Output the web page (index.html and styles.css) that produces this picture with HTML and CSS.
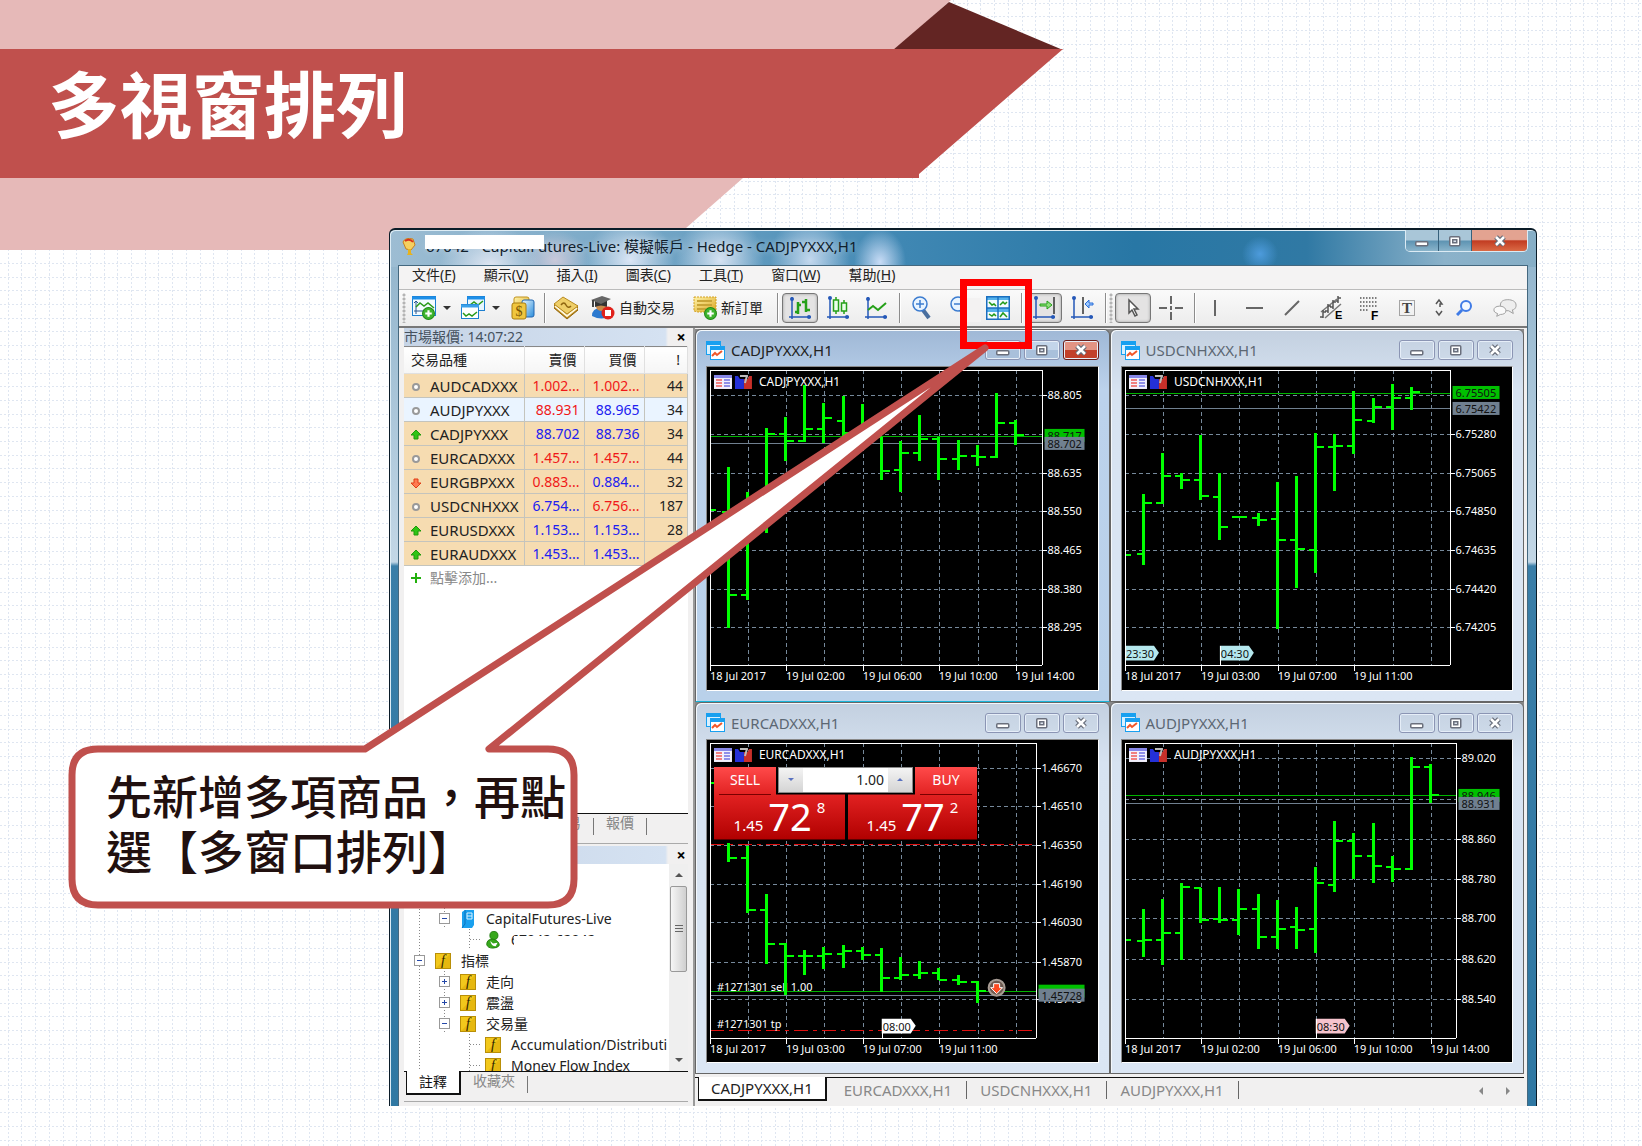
FILE: index.html
```html
<!DOCTYPE html>
<html lang="zh-Hant">
<head>
<meta charset="utf-8">
<title>多視窗排列</title>
<link rel="stylesheet" href="styles.css">
</head>
<body>
<svg class="defs" width="0" height="0" aria-hidden="true">
  <defs>
    <pattern id="paper" width="137" height="137" patternUnits="userSpaceOnUse">
      <path d="M8.500 0V137M21.500 0V137M35.500 0V137M49.500 0V137M63.500 0V137M76.500 0V137M90.500 0V137M104.500 0V137M117.500 0V137M131.500 0V137M0 3.500H137M0 16.500H137M0 30.500H137M0 44.500H137M0 57.500H137M0 71.500H137M0 85.500H137M0 99.500H137M0 112.500H137M0 126.500H137" stroke="#dfe6f1" stroke-dasharray="2 2" fill="none"/>
    </pattern>
    <linearGradient id="gold" x1="0" y1="0" x2="1" y2="1"><stop offset="0" stop-color="#fff3a8"/><stop offset="1" stop-color="#dba520"/></linearGradient>
    <linearGradient id="sky" x1="0" y1="0" x2="1" y2="1"><stop offset="0" stop-color="#e8f7ff"/><stop offset="1" stop-color="#2b8ddb"/></linearGradient>
    <symbol id="i-plus" viewBox="0 0 12 12"><circle cx="6" cy="6" r="5.500" fill="#3fb52e" stroke="#1f8a17"/><path d="M6 3v6M3 6h6" stroke="#fff" stroke-width="2"/></symbol>
    <symbol id="i-newchart" viewBox="0 0 24 24"><rect x=".5" y=".5" width="23" height="19" fill="#f4fbff" stroke="#1d7fd0"/><path d="M0 2h24" stroke="#1d8fe8" stroke-width="3"/><path d="M4 5v13M2 15h19M2 7l2-2 2 2" stroke="#28568e" fill="none"/><path d="M4 11l4-4 4 3 4-3 6 5" stroke="#2a9a1a" stroke-width="1.500" fill="none"/><use href="#i-plus" x="10" y="11" width="13" height="13"/></symbol>
    <symbol id="i-profiles" viewBox="0 0 24 24"><rect x="6.500" y=".5" width="17" height="14" fill="#e8f6ff" stroke="#1d7fd0"/><path d="M6 2h18" stroke="#1d8fe8" stroke-width="3"/><path d="M9 9l4-3 4 3 5-4" stroke="#2a9a1a" stroke-width="1.500" fill="none"/><rect x=".5" y="8.500" width="17" height="14" fill="#fff" stroke="#1d7fd0"/><path d="M0 10h18" stroke="#3aa0ea" stroke-width="3"/><path d="M2 17l3 3 3-2 3 2 5-4" stroke="#2a9a1a" stroke-width="1.500" fill="none"/></symbol>
    <symbol id="i-money" viewBox="0 0 24 24"><rect x="3" y="1" width="15" height="16" rx="2" fill="url(#gold)" stroke="#c0921c"/><rect x="11" y="4" width="12" height="17" rx="2" fill="url(#sky)" stroke="#2266b0"/><rect x="1" y="7" width="14" height="16" rx="2" fill="#f0c63e" stroke="#a87c10"/><text x="8" y="20" text-anchor="middle" font-size="14" font-family="Liberation Serif,serif" fill="#7a5200">$</text></symbol>
    <symbol id="i-book" viewBox="0 0 24 24"><path d="M0 8v4l13 11 11-9v-4z" fill="#b9861a" stroke="#96690d"/><path d="M1 10l12 10 10-8" stroke="#fff8dc" stroke-width="2" fill="none"/><path d="M0 8L9 1 24 10 13 18z" fill="#efcf68" stroke="#b88a20"/><path d="M7 9q3-4 5 0t5 1" stroke="#8e6510" stroke-width="1.500" fill="none"/></symbol>
    <symbol id="i-auto" viewBox="0 0 24 24"><path d="M1 20q0-8 9-8t9 8q-8 5-18 0z" fill="#2b79cf"/><circle cx="10" cy="10" r="5" fill="#c98a4a"/><path d="M4 5h12v6q-6-3-12 0z" fill="#333"/><path d="M0 4L11 0l9 3-10 5z" fill="#666"/><path d="M2 4v7" stroke="#444" stroke-width="2"/><circle cx="17" cy="17" r="6.500" fill="#e0211a"/><rect x="14" y="14" width="6" height="6" fill="#fff"/></symbol>
    <symbol id="i-order" viewBox="0 0 24 24"><path d="M1 1h22v15H5l-4-1z" fill="url(#gold)" stroke="#d3a020" stroke-dasharray="2 1"/><path d="M4 5h15M4 9h15M4 13h9" stroke="#c9a437" stroke-width="2"/><use href="#i-plus" x="11" y="11" width="13" height="13"/></symbol>
    <symbol id="i-bars" viewBox="0 0 24 24"><path d="M4 1v22M1 21h22" stroke="#2558b8" stroke-width="1.500"/><circle cx="4" cy="3" r="2" fill="#2558b8"/><circle cx="21" cy="21" r="2" fill="#2558b8"/><path d="M10 6v12M7 16h3M10 9h3M18 3v13M18 6h-4M18 14h4" stroke="#25a018" stroke-width="2.500"/></symbol>
    <symbol id="i-candles" viewBox="0 0 24 24"><path d="M4 1v22M1 21h22" stroke="#2558b8" stroke-width="1.500"/><circle cx="4" cy="2" r="2" fill="#2558b8"/><circle cx="21" cy="21" r="2" fill="#2558b8"/><path d="M10 1v17M18 4v14" stroke="#25a018" stroke-width="1.500"/><rect x="7.500" y="4" width="5" height="11" fill="#eaffea" stroke="#25a018" stroke-width="1.500"/><rect x="15.500" y="7" width="5" height="8" fill="#eaffea" stroke="#25a018" stroke-width="1.500"/></symbol>
    <symbol id="i-line" viewBox="0 0 24 24"><path d="M4 1v22M1 21h22" stroke="#2558b8" stroke-width="1.500"/><circle cx="4" cy="3" r="2" fill="#2558b8"/><circle cx="21" cy="21" r="2" fill="#2558b8"/><path d="M4 14l5-4 5 4 8-7" stroke="#25a018" stroke-width="2" fill="none"/></symbol>
    <symbol id="i-zoomin" viewBox="0 0 24 24"><path d="M13 14l6 8" stroke="#4a6f9e" stroke-width="4"/><circle cx="10" cy="8" r="7" fill="#e8f4ff" stroke="#3c7cd0" stroke-width="1.500"/><path d="M10 4v8M6 8h8" stroke="#3c7cd0" stroke-width="1.500"/></symbol>
    <symbol id="i-zoomout" viewBox="0 0 24 24"><path d="M13 14l6 8" stroke="#4a6f9e" stroke-width="4"/><circle cx="10" cy="8" r="7" fill="#e8f4ff" stroke="#3c7cd0" stroke-width="1.500"/><path d="M6 8h8" stroke="#3c7cd0" stroke-width="1.500"/></symbol>
    <symbol id="i-tile" viewBox="0 0 24 24"><rect width="24" height="24" fill="#f4fbff"/><path d="M0 2h24M0 14h24" stroke="#55b2ec" stroke-width="4"/><path d="M.75 0v24M12 0v24M23.250 0v24M0 .75h24M0 12h24M0 23.250h24" stroke="#1a6fc0" stroke-width="1.500"/><path d="M3 6l3 3 2-1 2 2M14 9l3-3 2 2 2-2M3 18l3 2 2-2 2 2M14 21l3-4 4 4" stroke="#229a18" stroke-width="1.500" fill="none"/></symbol>
    <symbol id="i-scroll" viewBox="0 0 24 24"><path d="M4 1v22M1 21h22" stroke="#2558b8" stroke-width="1.500"/><circle cx="4" cy="2" r="2" fill="#2558b8"/><circle cx="21" cy="21" r="2" fill="#2558b8"/><path d="M22 1v17" stroke="#333" stroke-width="1.500"/><path d="M8 8h7V5l5 4-5 4v-3H8z" fill="#8fe07a" stroke="#25a018"/></symbol>
    <symbol id="i-shift" viewBox="0 0 24 24"><path d="M4 1v22M1 21h22" stroke="#2558b8" stroke-width="1.500"/><circle cx="4" cy="2" r="2" fill="#2558b8"/><circle cx="21" cy="21" r="2" fill="#2558b8"/><path d="M13 1v17" stroke="#333" stroke-width="1.500"/><path d="M23 7h-4V4l-4 4 4 4V9h4z" fill="#9cc8ff" stroke="#2a6fd8"/></symbol>
    <symbol id="i-cursor" viewBox="0 0 24 24"><path d="M8 4v13l3-3 3 6 2-1-3-6h4z" fill="#fff" stroke="#555" stroke-width="1.500"/></symbol>
    <symbol id="i-cross" viewBox="0 0 24 24"><path d="M12 0v8M12 10v4M12 16v8M0 12h8M16 12h8" stroke="#666" stroke-width="2"/></symbol>
    <symbol id="i-vline" viewBox="0 0 24 24"><path d="M10 4v16" stroke="#666" stroke-width="2"/></symbol>
    <symbol id="i-hline" viewBox="0 0 24 24"><path d="M3 12h17" stroke="#666" stroke-width="2"/></symbol>
    <symbol id="i-trend" viewBox="0 0 24 24"><path d="M4 19L18 5" stroke="#666" stroke-width="2"/></symbol>
    <symbol id="i-channel" viewBox="0 0 24 24"><path d="M2 16L18 3M6 22L22 8" stroke="#777" stroke-width="1.500"/><path d="M4 14v8M1 21h3M4 16h3M9 8v9M6 15h3M9 10h3M14 4v9M11 11h3M14 6h3M19 0v7M17 5h2M19 2h3" stroke="#555" stroke-width="1.500"/><text x="16" y="23" font-size="11" font-weight="bold" font-family="Liberation Sans,sans-serif">E</text></symbol>
    <symbol id="i-fibo" viewBox="0 0 24 24"><path d="M3 2h17M3 6h17M3 10h17M3 14h9" stroke="#555" stroke-width="1.500" stroke-dasharray="1.500 1.500"/><text x="14" y="24" font-size="12" font-weight="bold" font-family="Liberation Sans,sans-serif">F</text></symbol>
    <symbol id="i-text" viewBox="0 0 24 24"><rect x="4.500" y="4.500" width="15" height="15" fill="none" stroke="#555" stroke-dasharray="1 1"/><text x="12" y="17" text-anchor="middle" font-size="15" font-weight="bold" font-family="Liberation Serif,serif" fill="#444">T</text></symbol>
    <symbol id="i-more" viewBox="0 0 10 24"><path d="M2 8l3-4 3 4H6v3M2 15l3 4 3-4" stroke="#555" stroke-width="1.500" fill="none"/></symbol>
    <symbol id="i-search" viewBox="0 0 16 16"><path d="M1 15l5-5" stroke="#3f7be6" stroke-width="3"/><circle cx="10" cy="6" r="5" fill="#f2f8ff" stroke="#3f7be6" stroke-width="2"/></symbol>
    <symbol id="i-chat" viewBox="0 0 26 20"><path d="M16 1c5 0 9 2 9 6s-3 5-4 5l1 4-5-3c-6 0-9-2-9-6s3-6 8-6z" fill="#eee" stroke="#999"/><path d="M7 8c4 0 7 2 7 5s-3 4-6 4l-4 2 1-3c-3-1-4-2-4-4s2-4 6-4z" fill="#fafafa" stroke="#999"/></symbol>
    <symbol id="i-mdi" viewBox="0 0 19 19"><rect x=".5" y=".5" width="14" height="13" fill="#d8f0ff" stroke="#18a0f0"/><path d="M0 2h15" stroke="#18a0f0" stroke-width="4"/><rect x="4.500" y="5.500" width="14" height="13" fill="#fff" stroke="#18a0f0"/><path d="M4 7h15" stroke="#18a0f0" stroke-width="4"/><path d="M6 15l3-3 2 2 5-4" stroke="#f0582a" stroke-width="2" fill="none"/></symbol>
    <symbol id="i-min" viewBox="0 0 14 12"><rect x=".75" y="6.750" width="12" height="4" rx="1" fill="#fff" stroke="#6a6f7c" stroke-width="1.500"/></symbol>
    <symbol id="i-max" viewBox="0 0 14 12"><rect x="1.750" y="1.750" width="10" height="9" rx="1" fill="#fff" stroke="#6a6f7c" stroke-width="1.500"/><rect x="4.750" y="4.750" width="4" height="3" fill="#dde4ee" stroke="#6a6f7c" stroke-width="1.500"/></symbol>
    <symbol id="i-close" viewBox="0 0 14 12"><path d="M3 2l8 8M11 2l-8 8" stroke="#666b78" stroke-width="5"/><path d="M3 2l8 8M11 2l-8 8" stroke="#fff" stroke-width="2.500"/></symbol>
    <symbol id="i-func" viewBox="0 0 16 16"><rect x=".5" y=".5" width="15" height="15" fill="#f2c81c" stroke="#b98f08"/><path d="M1 15L15 1v14z" fill="#e6b80f"/><text x="8" y="12" text-anchor="middle" font-size="14" font-style="italic" font-family="Liberation Serif,serif" fill="#2c2200">f</text></symbol>
    <symbol id="i-server" viewBox="0 0 14 18"><path d="M1 2l3-2h9v15l-2 3H1z" fill="#1aa0ee"/><path d="M4 0v14l-3 4" stroke="#0b73bd" fill="none"/><path d="M6 3h5v6H6zM6 6h5" stroke="#d8f2ff" fill="none"/></symbol>
    <symbol id="i-user" viewBox="0 0 16 20"><circle cx="9" cy="5" r="4.500" fill="#37a81c" stroke="#1f7a0c"/><path d="M1 15q0-6 7-6 7 2 7 7-2 3-7 3-6 0-7-4z" fill="#37a81c" stroke="#1f7a0c"/><path d="M5 11l3 3 5-1-2 4q-5 0-6-6z" fill="#fff"/></symbol>
    <symbol id="i-dot" viewBox="0 0 10 10"><circle cx="5" cy="5" r="3" fill="#fff" stroke="#999" stroke-width="2"/></symbol>
    <symbol id="i-up" viewBox="0 0 10 10"><path d="M5 0l5 5H7v4H3V5H0z" fill="#2fc414" stroke="#1e9a0a"/></symbol>
    <symbol id="i-down" viewBox="0 0 10 10"><path d="M5 10l5-5H7V1H3v4H0z" fill="#ff7a50" stroke="#e03c14"/></symbol>
    <symbol id="i-add" viewBox="0 0 10 10"><path d="M5 0v10M0 5h10" stroke="#22b00c" stroke-width="2"/></symbol>
  </defs>
</svg>

<main class="slide">
  <svg class="paper" aria-hidden="true"><rect width="100%" height="100%" fill="url(#paper)"/></svg>

  <header class="banner">
    <svg class="ribbon" width="1070" height="250" viewBox="0 0 1070 250" aria-hidden="true">
      <path d="M0 0H951L895 50H0z" fill="#e6b9b8"/>
      <path d="M0 178H743L661 250H0z" fill="#e6b9b8"/>
      <path d="M949 2L1063 50H893z" fill="#632523"/>
      <path d="M0 49H1063L919 174V178H0z" fill="#c0504d"/>
    </svg>
    <h1 class="heading">多視窗排列</h1>
  </header>

  <section class="window" aria-label="CapitalFutures-Live">
    <div class="titlebar">
      <svg class="app-icon" viewBox="0 0 14 18"><path d="M1 4q2-5 10-3l2 6-4 5-5-1z" fill="#f5d060" stroke="#c9811c"/><path d="M3 3q5-3 8 1" stroke="#d8321c" stroke-width="2" fill="none"/><path d="M6 11h3v4l2 2H5l1-2z" fill="#e8b21c"/></svg>
      <p class="title">67042 - CapitalFutures-Live: 模擬帳戶 - Hedge - CADJPYXXX,H1</p>
      <div class="controls">
        <button class="ctl" aria-label="最小化"><svg><use href="#i-min"/></svg></button>
        <button class="ctl" aria-label="最大化"><svg><use href="#i-max"/></svg></button>
        <button class="ctl ctl-close" aria-label="關閉"><svg><use href="#i-close"/></svg></button>
      </div>
    </div>

    <div class="client">
      <nav class="menu">
        <button>文件(<u>F</u>)</button><button>顯示(<u>V</u>)</button><button>插入(<u>I</u>)</button><button>圖表(<u>C</u>)</button><button>工具(<u>T</u>)</button><button>窗口(<u>W</u>)</button><button>幫助(<u>H</u>)</button>
      </nav>

      <div class="toolbar">
        <i class="grip"></i>
        <button class="tool tool-drop" aria-label="新圖表"><svg><use href="#i-newchart"/></svg><i class="caret"></i></button>
        <button class="tool tool-drop" aria-label="配置"><svg><use href="#i-profiles"/></svg><i class="caret"></i></button>
        <button class="tool tool-slim" aria-label="市場報價"><svg><use href="#i-money"/></svg></button>
        <i class="sep"></i>
        <button class="tool tool-slim" aria-label="歷史"><svg><use href="#i-book"/></svg></button>
        <button class="tool tool-text"><svg><use href="#i-auto"/></svg>自動交易</button>
        <button class="tool tool-text"><svg><use href="#i-order"/></svg>新訂單</button>
        <i class="sep"></i>
        <button class="tool pressed" aria-label="柱狀圖"><svg><use href="#i-bars"/></svg></button>
        <button class="tool" aria-label="蠟燭圖"><svg><use href="#i-candles"/></svg></button>
        <button class="tool" aria-label="折線圖"><svg><use href="#i-line"/></svg></button>
        <i class="sep"></i>
        <button class="tool" aria-label="放大"><svg><use href="#i-zoomin"/></svg></button>
        <button class="tool" aria-label="縮小"><svg><use href="#i-zoomout"/></svg></button>
        <button class="tool" aria-label="多窗口排列"><svg><use href="#i-tile"/></svg></button>
        <i class="sep"></i>
        <button class="tool pressed" aria-label="自動滾動"><svg><use href="#i-scroll"/></svg></button>
        <button class="tool" aria-label="圖表平移"><svg><use href="#i-shift"/></svg></button>
        <i class="sep"></i>
        <i class="grip"></i>
        <button class="tool pressed" aria-label="光標"><svg><use href="#i-cursor"/></svg></button>
        <button class="tool" aria-label="十字準線"><svg><use href="#i-cross"/></svg></button>
        <i class="sep"></i>
        <button class="tool" aria-label="垂直線"><svg><use href="#i-vline"/></svg></button>
        <button class="tool" aria-label="水平線"><svg><use href="#i-hline"/></svg></button>
        <button class="tool" aria-label="趨勢線"><svg><use href="#i-trend"/></svg></button>
        <button class="tool" aria-label="等距通道"><svg><use href="#i-channel"/></svg></button>
        <button class="tool" aria-label="斐波那契"><svg><use href="#i-fibo"/></svg></button>
        <button class="tool" aria-label="文字"><svg><use href="#i-text"/></svg></button>
        <button class="tool tool-mini" aria-label="更多"><svg class="narrow"><use href="#i-more"/></svg></button>
        <button class="tool tool-mini" aria-label="搜尋"><svg class="small"><use href="#i-search"/></svg></button>
        <button class="tool tool-last" aria-label="聊天"><svg><use href="#i-chat"/></svg></button>
      </div>

      <div class="workspace">
        <aside class="side">
          <section class="market">
            <h2 class="panel-title">市場報價: 14:07:22<button class="panel-close" aria-label="關閉">×</button></h2>
            <table class="quotes">
              <colgroup><col class="c-name"><col class="c-price"><col class="c-price"><col class="c-spread"></colgroup>
              <thead><tr><th>交易品種</th><th>賣價</th><th>買價</th><th>!</th></tr></thead>
              <tbody>
                <tr><td><svg><use href="#i-dot"/></svg>AUDCADXXX</td><td class="dn">1.002...</td><td class="dn">1.002...</td><td>44</td></tr>
                <tr class="sel"><td><svg><use href="#i-dot"/></svg>AUDJPYXXX</td><td class="dn">88.931</td><td class="up">88.965</td><td>34</td></tr>
                <tr><td><svg><use href="#i-up"/></svg>CADJPYXXX</td><td class="up">88.702</td><td class="up">88.736</td><td>34</td></tr>
                <tr><td><svg><use href="#i-dot"/></svg>EURCADXXX</td><td class="dn">1.457...</td><td class="dn">1.457...</td><td>44</td></tr>
                <tr><td><svg><use href="#i-down"/></svg>EURGBPXXX</td><td class="dn">0.883...</td><td class="up">0.884...</td><td>32</td></tr>
                <tr><td><svg><use href="#i-dot"/></svg>USDCNHXXX</td><td class="up">6.754...</td><td class="dn">6.756...</td><td>187</td></tr>
                <tr><td><svg><use href="#i-up"/></svg>EURUSDXXX</td><td class="up">1.153...</td><td class="up">1.153...</td><td>28</td></tr>
                <tr><td><svg><use href="#i-up"/></svg>EURAUDXXX</td><td class="up">1.453...</td><td class="up">1.453...</td><td></td></tr>
              </tbody>
            </table>
            <button class="add"><svg><use href="#i-add"/></svg>點擊添加...</button>
          </section>
          <div class="side-tabs market-tabs"><button>易</button><button>報價</button></div>

          <h2 class="panel-title"><span></span><button class="panel-close" aria-label="關閉">×</button></h2>
          <div class="nav-body">
            <ul class="tree">
              <li class="l1"></li>
              <li class="l1"></li>
              <li class="l2"><i class="box"></i><svg><use href="#i-server"/></svg>CapitalFutures-Live</li>
              <li class="l3"><svg><use href="#i-user"/></svg><span class="masked">67042-62042</span></li>
              <li class="l1"><i class="box"></i><svg><use href="#i-func"/></svg>指標</li>
              <li class="l2"><i class="box box-plus"></i><svg><use href="#i-func"/></svg>走向</li>
              <li class="l2"><i class="box box-plus"></i><svg><use href="#i-func"/></svg>震盪</li>
              <li class="l2"><i class="box"></i><svg><use href="#i-func"/></svg>交易量</li>
              <li class="l3"><svg><use href="#i-func"/></svg>Accumulation/Distributi</li>
              <li class="l3"><svg><use href="#i-func"/></svg>Money Flow Index</li>
            </ul>
            <div class="scroll"><i class="arr-up"></i><i class="thumb"></i><i class="arr-down"></i></div>
          </div>
          <div class="side-tabs nav-tabs"><button class="on">註釋</button><button>收藏夾</button></div>
        </aside>

        <div class="charts">
          <div class="panes">
            <article class="pane active">
              <header><svg class="mdi"><use href="#i-mdi"/></svg><h3>CADJPYXXX,H1</h3><button class="pb" aria-label="最小化"><svg><use href="#i-min"/></svg></button><button class="pb" aria-label="最大化"><svg><use href="#i-max"/></svg></button><button class="pb pb-close" aria-label="關閉"><svg><use href="#i-close"/></svg></button></header>
              <div class="plot"><svg class="chart" viewBox="0 0 391 323" data-chart="CADJPYXXX"></svg></div>
            </article>
            <article class="pane">
              <header><svg class="mdi"><use href="#i-mdi"/></svg><h3>USDCNHXXX,H1</h3><button class="pb" aria-label="最小化"><svg><use href="#i-min"/></svg></button><button class="pb" aria-label="最大化"><svg><use href="#i-max"/></svg></button><button class="pb" aria-label="關閉"><svg><use href="#i-close"/></svg></button></header>
              <div class="plot"><svg class="chart" viewBox="0 0 391 323" data-chart="USDCNHXXX"></svg></div>
            </article>
            <article class="pane">
              <header><svg class="mdi"><use href="#i-mdi"/></svg><h3>EURCADXXX,H1</h3><button class="pb" aria-label="最小化"><svg><use href="#i-min"/></svg></button><button class="pb" aria-label="最大化"><svg><use href="#i-max"/></svg></button><button class="pb" aria-label="關閉"><svg><use href="#i-close"/></svg></button></header>
              <div class="plot"><svg class="chart" viewBox="0 0 391 323" data-chart="EURCADXXX"></svg>
                <div class="oneclick">
                  <button class="deal sell"><span class="side-name">SELL</span><span class="price">1.45 <b>72</b><sup>8</sup></span></button>
                  <button class="deal buy"><span class="side-name">BUY</span><span class="price">1.45 <b>77</b><sup>2</sup></span></button>
                  <div class="volume"><button class="step" aria-label="減少"><i class="tri-down"></i></button><input aria-label="手數" value="1.00"><button class="step" aria-label="增加"><i class="tri-up"></i></button></div>
                </div>
              </div>
            </article>
            <article class="pane">
              <header><svg class="mdi"><use href="#i-mdi"/></svg><h3>AUDJPYXXX,H1</h3><button class="pb" aria-label="最小化"><svg><use href="#i-min"/></svg></button><button class="pb" aria-label="最大化"><svg><use href="#i-max"/></svg></button><button class="pb" aria-label="關閉"><svg><use href="#i-close"/></svg></button></header>
              <div class="plot"><svg class="chart" viewBox="0 0 391 323" data-chart="AUDJPYXXX"></svg></div>
            </article>
          </div>
          <div class="chart-tabs"><button class="on">CADJPYXXX,H1</button><button>EURCADXXX,H1</button><button>USDCNHXXX,H1</button><button>AUDJPYXXX,H1</button><span class="pager"><i class="tri-left"></i><i class="tri-right"></i></span></div>
        </div>
      </div>
    </div>
  </section>

  <div class="highlight"></div>
  <aside class="callout">
    <svg width="510" height="164" viewBox="0 0 510 164" aria-hidden="true"><path d="M30 4H297L917 -397 421 4H480Q506 4 506 30V134Q506 160 480 160H30Q4 160 4 134V30Q4 4 30 4z" fill="#fff" stroke="#c0504d" stroke-width="7" stroke-linejoin="round"/></svg>
    <p>先新增多項商品，再點<br>選【多窗口排列】</p>
  </aside>
</main>
<script src="charts.js"></script>
</body>
</html>
```

FILE: styles.css
```css
* { box-sizing: border-box; }
body { margin: 0; background: #fff; color: #222; font: 14px/20px "Noto Sans", "Noto Sans CJK TC", sans-serif; }
h1, h2, h3, p, ul { margin: 0; padding: 0; font-weight: normal; }
button { margin: 0; padding: 0; border: 0; background: none; color: inherit; font: inherit; }
i { font-style: normal; }
.defs { position: absolute; }

.slide { position: relative; min-height: 100vh; padding-bottom: 40px; overflow: hidden; }
.paper { position: absolute; inset: 0; width: 100%; height: 100%; }

/* Ribbon */
.banner { position: relative; height: 228px; padding: 47px 0 0 48px; }
.ribbon { position: absolute; top: 0; left: 0; }
.heading { position: relative; color: #fff; font: bold 72px/108px "DFKai-SB", "BiauKai", "Noto Sans CJK TC", sans-serif; }

/* Application window */
.window {
  position: relative; margin: 0 105px 0 389px; padding: 0 8px; border: solid #0b1c28; border-width: 2px 1px 0; border-radius: 6px 6px 0 0;
  background:
    radial-gradient(ellipse at 100px 36px, #dfe6f2 0, transparent 50px) no-repeat,
    radial-gradient(ellipse at 165px 30px, #c9c9da 0, transparent 34px) no-repeat,
    radial-gradient(ellipse at 240px 30px, #dbe6f5 0, transparent 44px) no-repeat,
    radial-gradient(ellipse at 330px 30px, #d5e2f2 0, transparent 44px) no-repeat,
    radial-gradient(ellipse at 420px 30px, #c3d8ee 0, transparent 40px) no-repeat,
    radial-gradient(ellipse at 490px 32px, #c8dcf6 0, transparent 26px) no-repeat,
    radial-gradient(ellipse at 870px 24px, #4d9bdc 0, transparent 18px) no-repeat,
    linear-gradient(90deg, #9dbdd3 0, #6fa3c4 25%, #3f87b3 45%, #2877a5 65%, #3079a4 80%, #8bb2ca 92%, #86aec6 100%) 0 0 / 100% 37px no-repeat,
    linear-gradient(180deg, #8fb3cb 0, #c3d7e6 332px, #3a7ea8 336px, #2f78a3 100%);
  box-shadow: inset 1px 1px 0 #dcecf5;
}
.titlebar { display: flex; height: 35px; }
.app-icon { width: 14px; height: 18px; margin: 8px 10px 0 4px; }
.title { position: relative; flex: 1; padding-top: 6px; color: #10202c; font-size: 15px; text-shadow: 0 0 6px #ffffff80; }
.title::before { content: ""; position: absolute; left: -1px; top: 5px; width: 119px; height: 14px; background: #fff; }
.controls { display: flex; height: 22px; border: 1px solid #dcebf4; border-top: 0; border-radius: 0 0 5px 5px; overflow: hidden; }
.ctl { display: grid; place-items: center; width: 33px; border-right: 1px solid #37617c; background: linear-gradient(#a9c6d8 48%, #5d93b2 52%, #8ab4cb); }
.ctl-close { width: 55px; border: 0; background: linear-gradient(#e3a391 45%, #c23c22 52%, #da6a45); }
.ctl svg, .pb svg { width: 14px; height: 12px; }
.client { border: 1px solid #44687f; border-width: 1px 1px 0; background: #f1f0f0; }

.menu { display: flex; align-items: flex-start; gap: 28px; height: 24px; padding-left: 13px; border-bottom: 1px solid #bbb; line-height: 18px; background: #f4f3f3; }

.toolbar { display: flex; align-items: center; height: 38px; padding: 0 3px; border-bottom: 2px solid #777; background: linear-gradient(#fafafa, #ececec); }
.grip { width: 4px; height: 30px; margin-right: 1px; background: radial-gradient(circle at 2px 2px, #b4b4b4 1px, transparent 2px) 0 0 / 4px 4px; }
.sep { width: 2px; height: 30px; margin: 0 2px 0 4px; border-left: 1px solid #8c8c8c; border-right: 1px solid #fff; }
.tool { display: flex; align-items: center; justify-content: center; flex: none; width: 36px; height: 30px; margin: 0 1px; border-radius: 4px; }
.tool svg { width: 24px; height: 24px; flex: none; }
.tool .narrow { width: 10px; }
.tool .small { width: 16px; height: 16px; }
.tool-drop { width: 49px; margin: 0; gap: 7px; }
.tool-slim { width: 35px; margin: 0; }
.tool-text { width: auto; margin: 0; padding: 0 10px 0 8px; gap: 4px; }
.tool-mini { width: 23px; }
.tool-last { margin-left: auto; }
.pressed { border: 1px solid #777; background: #e4e3e3; box-shadow: inset 0 0 3px #999; }
.caret { border: 4px solid transparent; border-top-color: #333; border-bottom: 0; }

/* Side panels */
.workspace { display: grid; grid-template-columns: 296px 1fr; }
.side { display: flex; flex-direction: column; min-width: 0; padding: 0 5px 0 5px; border-right: 2px solid #9a9a9a; }
.market { flex: 1; background: #fff; }
.panel-title { display: flex; align-items: center; justify-content: space-between; height: 18px; padding-right: 1px; font-size: 14px; line-height: 16px; color: #46525f; background: linear-gradient(90deg, #c6d4e6, #d5e2f2 92%, #f1f0f0 93%); }
.panel-close { width: 12px; color: #000; font-weight: bold; font-size: 16px; line-height: 16px; }
.quotes { width: 100%; border-collapse: collapse; table-layout: fixed; border-top: 1px solid #888; }
.c-name { width: 120px; }
.c-price { width: 60px; }
.quotes th { height: 27px; padding: 0 7px; border: 1px solid #e0e0e0; border-width: 0 1px 1px 0; font-weight: normal; text-align: right; background: linear-gradient(#fff, #f5f5f5); }
.quotes th:first-child { text-align: left; }
.quotes td { height: 24px; padding: 0 4px 0 0; border: 1px solid #c4c4bd; border-width: 1px 1px 1px 0; line-height: 22px; text-align: right; white-space: nowrap; background: #f6dcb1; }
.quotes td:first-child { padding-left: 7px; font-size: 15px; text-align: left; overflow: hidden; }
.quotes .sel td { background: #eaf4ff; }
.quotes svg, .add svg { width: 10px; height: 10px; margin-right: 9px; }
.quotes .dn { color: #f01818; }
.quotes .up { color: #2020f0; }
.add { display: block; height: 24px; padding-left: 7px; color: #888; }
.side-tabs { display: flex; height: 31px; padding-left: 2px; border-top: 1px solid #111; border-bottom: 1px solid #aaa; margin-bottom: 2px; color: #888; }
.side-tabs button { position: relative; height: 24px; padding: 0 13px 4px 12px; margin-top: -1px; }
.side-tabs button::after { content: ""; position: absolute; right: 0; top: 5px; height: 17px; border-right: 1px solid #777; }
.side-tabs .on { padding: 0 12px; color: #111; border: solid #111; border-width: 0 2px 2px 1px; background: #fff; }
.side-tabs .on::after { display: none; }
.market-tabs { padding-left: 151px; }
.nav-body { display: flex; height: 207px; overflow: hidden; background: #fff; }
.nav-tabs { margin-bottom: 4px; }
.tree { flex: 1; min-width: 0; overflow: hidden; padding-top: 2px; list-style: none; background: repeating-linear-gradient(#888 0 1px, #fff 1px 3px) 15px 0 / 1px 100% no-repeat; }
.tree li { display: flex; align-items: center; height: 21px; white-space: nowrap; color: #222; }
.tree svg { flex: none; width: 16px; height: 18px; margin-right: 10px; }
.box { flex: none; width: 11px; height: 11px; margin-right: 10px; border: 1px solid #999; background: linear-gradient(#2448a8, #2448a8) center / 5px 1px no-repeat #fff; }
.box-plus { background: linear-gradient(#2448a8, #2448a8) center / 5px 1px no-repeat, linear-gradient(#2448a8, #2448a8) center / 1px 5px no-repeat #fff; }
.l1 { padding-left: 10px; }
.l2 { padding-left: 35px; background: repeating-linear-gradient(#888 0 1px, #fff 1px 3px) 40px 0 / 1px 100% no-repeat; }
.l3 { padding-left: 81px; background: repeating-linear-gradient(#888 0 1px, #fff 1px 3px) 65px 0 / 1px 100% no-repeat, repeating-linear-gradient(90deg, #888 0 1px, #fff 1px 3px) 66px 10px / 12px 1px no-repeat; }
.masked { position: relative; }
.masked::after { content: ""; position: absolute; left: 3px; right: 0; top: 6px; bottom: 0; background: #fff; }
.scroll { display: flex; flex-direction: column; align-items: center; width: 19px; background: #efefef; }
.arr-up { margin: 9px 0; border: 4px solid transparent; border-bottom-color: #555; border-top: 0; }
.arr-down { margin: auto 0 9px; border: 4px solid transparent; border-top-color: #555; border-bottom: 0; }
.thumb { width: 17px; height: 86px; border: 1px solid #999; border-radius: 2px; background: repeating-linear-gradient(#666 0 1px, transparent 1px 3px) center / 8px 9px no-repeat, linear-gradient(90deg, #f6f6f6, #cfcfcf); }

/* Chart windows */
.charts { min-width: 0; padding: 1px 3px 3px 0; }
.panes { display: grid; grid-template-columns: 1fr 1fr; background: #888; }
.pane { min-width: 0; padding: 0 10px 10px; border: 1px solid #666; border-radius: 6px 6px 0 0; background: linear-gradient(#c3d0e0 0, #d7e3f1 60px, #dbe6f4); box-shadow: inset 1px 1px 0 #f4f8fc; color: #5c6773; }
.pane.active { border-bottom-color: #18b4d8; background: linear-gradient(#9fb8d6 0, #bcd2ec 60px, #b9d1ea); color: #222; }
.pane header { display: flex; align-items: center; gap: 3px; height: 36px; padding: 4px 0 0; }
.pane h3 { flex: 1; padding-left: 3px; font-size: 15px; }
.mdi { width: 19px; height: 19px; }
.pb { display: grid; place-items: center; width: 36px; height: 20px; border: 1px solid #8b95b4; border-radius: 3px; box-shadow: inset 0 0 0 1px #e6eef8; }
.active .pb { background: linear-gradient(#c3d5ea 50%, #a9c0db 50%); }
.active .pb-close { border-color: #6b1e1a; background: linear-gradient(#e29484 50%, #c2402a 50%); }
.plot { position: relative; border: 1px solid #8a8a8a; border-right-color: #fff; border-bottom-color: #fff; background: #000; }
.chart { display: block; width: 100%; height: auto; }
.chart text { font-size: 11px; fill: #fff; }
.chart .name { font-size: 12px; }
.chart .ink { fill: #111; }

.oneclick { position: absolute; left: 7px; top: 27px; width: 263px; height: 73px; display: grid; grid-template-columns: 131px 129px; gap: 3px; background: #000; }
.deal { display: flex; flex-direction: column; color: #fff; background: linear-gradient(#ff4a4a, #e02020 40%, #b00000); }
.sell { align-items: flex-start; clip-path: polygon(0 0, 62px 0, 62px 28px, 100% 28px, 100% 100%, 0 100%); }
.buy { align-items: flex-end; clip-path: polygon(67px 0, 100% 0, 100% 100%, 0 100%, 0 28px, 67px 28px); }
.side-name { width: 52px; height: 28px; margin: 0 5px; border-bottom: 1px solid #7a0000; text-align: center; line-height: 26px; }
.price { display: flex; align-items: flex-end; align-self: center; gap: 5px; height: 42px; font-size: 15px; line-height: 20px; padding-bottom: 2px; }
.price b { font-size: 38px; font-weight: normal; line-height: 38px; }
.price sup { align-self: flex-start; font-size: 15px; line-height: 24px; }
.volume { position: absolute; left: 64px; top: 0; display: flex; width: 135px; height: 26px; border: 1px solid #888; background: #fff; }
.volume input { flex: 1; min-width: 0; padding: 0 4px; border: 0; color: #222; background: #fff; font: inherit; text-align: right; }
.step { display: grid; place-items: center; width: 24px; background: linear-gradient(#f4f4f4, #d4d4d4); }
.tri-down { border: 3px solid transparent; border-top-color: #5a72c0; border-bottom: 0; }
.tri-up { border: 3px solid transparent; border-bottom-color: #5a72c0; border-top: 0; }

.chart-tabs { display: flex; height: 26px; margin-top: 3px; padding-left: 3px; border-top: 1px solid #111; color: #888; font-size: 15px; }
.chart-tabs button { position: relative; padding: 0 15px 2px 13px; }
.chart-tabs button::after { content: ""; position: absolute; right: 0; top: 3px; height: 18px; border-right: 1px solid #666; }
.chart-tabs .on { height: 24px; margin-top: -1px; padding: 0 12px; color: #222; border: solid #111; border-width: 0 2px 2px 1px; background: #fff; }
.chart-tabs .on::after { display: none; }
.chart-tabs .on + button { padding-left: 17px; }
.pager { display: flex; gap: 23px; align-items: center; margin-left: auto; padding-right: 14px; }
.tri-left { border: 4px solid transparent; border-right-color: #888; border-left: 0; }
.tri-right { border: 4px solid transparent; border-left-color: #888; border-right: 0; }

/* Annotations */
.highlight { position: absolute; left: 960px; top: 279px; width: 72px; height: 70px; border: 7px solid #f00; }
.highlight::before { content: ""; position: absolute; left: 0; top: 12px; width: 14px; height: 24px; background: #f3f2f2; }
.callout { position: absolute; left: 68px; top: 745px; width: 510px; }
.callout svg { position: absolute; left: 0; top: 0; overflow: visible; }
.callout p { position: relative; padding: 22px 0 0 38px; color: #21100f; font: 500 46px/55px "DFKai-SB", "BiauKai", "Noto Sans CJK TC", sans-serif; white-space: nowrap; }
```

FILE: charts.js
```js
// Bars are [high, low, open, close] in plot units, one per hour.
const TOP = [28, 67, 106, 144, 183, 222, 260];
const charts = {
  CADJPYXXX: {
    right: 335, first: 143, rows: TOP, labels: ['88.805', '', '88.635', '88.550', '88.465', '88.380', '88.295'],
    times: ['18 Jul 2017', '19 Jul 02:00', '19 Jul 06:00', '19 Jul 10:00', '19 Jul 14:00'],
    ask: [69, '88.717', 62], bid: [76, '88.702', 70], flags: [],
    bars: [[100,261,145,228],[125,233,228,134],[61,166,134,67],[50,94,67,74],[18,75,74,62],[36,76,62,51],[29,70,54,66],[37,69,66,68],[70,113,70,104],[74,125,103,86],[48,94,86,72],[70,113,72,92],[73,103,92,89],[78,99,89,90],[26,91,90,56],[53,78,56,68]]
  },
  USDCNHXXX: {
    right: 328, first: 188, rows: TOP, labels: ['', '6.75280', '6.75065', '6.74850', '6.74635', '6.74420', '6.74205'],
    times: ['18 Jul 2017', '19 Jul 03:00', '19 Jul 07:00', '19 Jul 11:00'],
    ask: [26, '6.75505', 19], bid: [41, '6.75422', 35], flags: [[3, '23:30', '#b5e8ee'], [98, '04:30', '#b5e8ee']],
    bars: [[127,198,187,136],[86,137,136,109],[106,122,109,113],[68,133,113,129],[106,173,130,160],[149,151,150,150],[146,159,151,153],[115,262,152,173],[109,221,173,182],[66,206,183,80],[67,124,80,79],[24,87,79,53],[31,56,54,40],[17,63,40,31],[20,43,31,25]]
  },
  EURCADXXX: {
    right: 329, first: 43, rows: [28, 66, 105, 144, 182, 222, 259], labels: ['1.46670', '1.46510', '1.46350', '1.46190', '1.46030', '1.45870', '1.45710'],
    times: ['18 Jul 2017', '19 Jul 03:00', '19 Jul 07:00', '19 Jul 11:00'],
    ask: [251, '', 245], bid: [255, '1.45728', 249], flags: [[175, '08:00', '#fff']],
    stops: [104, 290], notes: [['#1271301 sell 1.00', 251], ['#1271301 tp', 288]], marker: [290, 248],
    bars: [[103,122,null,118],[106,173,118,170],[154,224,170,204],[203,255,204,216],[210,235,216,216],[207,229,216,214],[205,228,214,211],[207,220,211,215],[208,252,215,238],[217,240,238,235],[221,239,235,233],[228,240,233,240],[235,245,240,242],[241,263,242,251]]
  },
  AUDJPYXXX: {
    right: 334, first: 200, rows: [18, 59, 99, 139, 178, 219, 259], labels: ['89.020', '', '88.860', '88.780', '88.700', '88.620', '88.540'],
    times: ['18 Jul 2017', '19 Jul 02:00', '19 Jul 06:00', '19 Jul 10:00', '19 Jul 14:00'],
    ask: [55, '88.946', 49], bid: [63, '88.931', 57], flags: [[194, '08:30', '#f6c3cd']],
    bars: [[169,217,201,200],[159,225,200,193],[143,220,193,147],[148,183,148,180],[147,183,179,180],[149,195,180,169],[154,209,169,197],[160,209,197,189],[167,209,187,190],[127,213,189,143],[81,152,145,101],[93,139,101,116],[83,143,116,126],[116,142,127,129],[17,130,129,27],[24,63,27,55]]
  }
};

const LEFT = 3, BOTTOM = 298;
const barX = i => Math.round(21.6 + 19.17 * i);
const line = (d, stroke, extra = '') => `<path d="${d}" stroke="${stroke}" fill="none" shape-rendering="crispEdges" ${extra}/>`;
const text = (x, y, s, cls = '') => `<text x="${x}" y="${y}" class="${cls}">${s}</text>`;

function draw(name, c) {
  const { right, rows } = c;
  const cols = [1, 3, 5, 7, 9, 11, 13, 15].map(barX);
  let out = '';
  out += line(rows.map(y => `M${LEFT} ${y + .5}H${right}`).join('') + cols.map(x => `M${x + .5} 3V${BOTTOM}`).join(''), '#76899b', 'stroke-dasharray="4 3"');
  (c.stops || []).forEach(y => { out += line(`M${LEFT} ${y + .5}H${right}`, '#e01010', 'stroke-dasharray="14 5 4 5"'); });
  out += line(`M${LEFT} ${c.bid[0] + .5}H${right}`, '#708090');
  out += line(`M${LEFT} ${c.ask[0] + .5}H${right}`, '#00b400');
  (c.notes || []).forEach(([s, y]) => { out += text(10, y, s); });

  let stems = '', ticks = `M${LEFT} ${c.first}h6`;
  c.bars.forEach(([hi, lo, open, close], i) => {
    const x = barX(i);
    stems += `M${x} ${hi}V${lo}`;
    if (open !== null) ticks += `M${x - 7} ${open}H${x}`;
    ticks += `M${x} ${close}H${x + 8}`;
  });
  out += line(stems, '#00ff00', 'stroke-width="3"') + line(ticks, '#00ff00', 'stroke-width="2"');

  out += line(`M3.5 ${BOTTOM + 5}V3.5H${right + .5}V${BOTTOM + .5}H3`, '#fff');
  c.times.forEach((s, i) => {
    const x = i ? barX(4 * i - 1) : LEFT;
    out += line(`M${x + .5} ${BOTTOM}v6`, '#fff') + text(x, 313, s);
  });
  c.labels.forEach((s, i) => {
    if (s) out += line(`M${right} ${rows[i] + .5}h5`, '#fff') + text(right + 6, rows[i] + 4, s);
  });
  out += `<rect x="${right + 3}" y="${c.ask[2]}" width="${378 - right - 3}" height="13" fill="#00c000"/>` + text(right + 6, c.ask[2] + 11, c.ask[1], 'ink');
  out += `<rect x="${right + 3}" y="${c.bid[2]}" width="${378 - right - 3}" height="13" fill="#708090"/>` + text(right + 6, c.bid[2] + 11, c.bid[1], 'ink');
  c.flags.forEach(([x, s, fill]) => {
    out += `<path d="M${x} 279h29l5 7-5 8h-29z" fill="${fill}"/>` + line(`M${x + .5} 279V${BOTTOM}`, '#fff') + text(x + 1, 291, s, 'ink');
  });
  if (c.marker) {
    const [x, y] = c.marker;
    out += `<circle cx="${x}" cy="${y}" r="8" fill="#6e5a50" stroke="#a79c94" stroke-width="2"/><path d="M${x} ${y + 6}l6-6h-3v-4h-6v4h-3z" fill="#ff4a20" stroke="#fff"/>`;
  }
  out += '<rect x="7" y="8" width="18" height="14" fill="#f2f0fc"/><path d="M7 9.500h18" stroke="#8888e8" stroke-width="3"/><path d="M9 13h6M9 16h6M9 19h6" stroke="#f08080" stroke-width="2"/><path d="M17 13h6M17 16h6M17 19h6" stroke="#9090e8" stroke-width="2"/>';
  out += '<path d="M28 9h3l2 3h4v10h-9z" fill="#2430d8"/><path d="M37 12h4l1-3h3v13h-8z" fill="#c8302a"/><path d="M33 9h8M40 9l-2 7" stroke="#bbb" stroke-width="2"/>';
  out += text(52, 19, name + ',H1', 'name');
  return out;
}

document.querySelectorAll('[data-chart]').forEach(svg => {
  svg.innerHTML = draw(svg.dataset.chart, charts[svg.dataset.chart]);
});
```
